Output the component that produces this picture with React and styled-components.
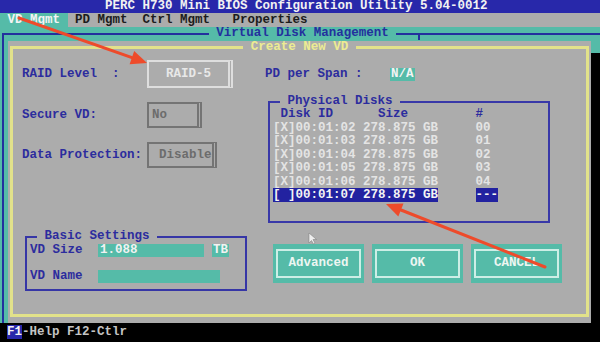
import React from "react";
import styled, { createGlobalStyle } from "styled-components";

const blue = "#2828aa";
const navy = "#2c2c9e";
const gray = "#acacac";
const teal = "#55bba8";
const yellow = "#e2e28a";

const GlobalStyle = createGlobalStyle`
    body{
        margin:0;
        background:#000;
    }
`;

const disks = [
    { id: "00:01:02", no: "00" },
    { id: "00:01:03", no: "01" },
    { id: "00:01:04", no: "02" },
    { id: "00:01:05", no: "03" },
    { id: "00:01:06", no: "04" },
];

function App() {
    return (<>
    <GlobalStyle />
    <Screen>
        <TitleBar>PERC H730 Mini BIOS Configuration Utility 5.04-0012</TitleBar>
        <MenuBar>
            <MenuItem $active>VD Mgmt</MenuItem>
            <MenuItem>PD Mgmt</MenuItem>
            <MenuItem>Ctrl Mgmt</MenuItem>
            <MenuItem $ml="1ch">Properties</MenuItem>
        </MenuBar>
        <Desktop>
            <Frame>
                <FrameTitle>Virtual Disk Management</FrameTitle>
                <Panel>
                    <Dialog>
                        <DialogTitle>Create New VD</DialogTitle>
                        <Body>
                            <LeftCol>
                                <FieldRow $h={28}>
                                    <Label>RAID Level  :</Label>
                                    <ValueBox $w={86} $focus $center>RAID-5</ValueBox>
                                </FieldRow>
                                <FieldRow $h={26} $mt={14}>
                                    <Label>Secure VD:</Label>
                                    <ValueBox $w={55} $pl={3}>No</ValueBox>
                                </FieldRow>
                                <FieldRow $h={26} $mt={14}>
                                    <Label>Data Protection:</Label>
                                    <ValueBox $w={70} $pl={10}>Disable</ValueBox>
                                </FieldRow>
                                <Group>
                                    <GroupTitle>Basic Settings</GroupTitle>
                                    <GroupBody>
                                        <InputRow>
                                            <InputLabel>VD Size</InputLabel>
                                            <InputField $w={106}>1.088</InputField>
                                            <Unit>TB</Unit>
                                        </InputRow>
                                        <InputRow>
                                            <InputLabel>VD Name</InputLabel>
                                            <InputField $w={122}></InputField>
                                        </InputRow>
                                    </GroupBody>
                                </Group>
                            </LeftCol>
                            <RightCol>
                                <SpanRow>
                                    <Label as="span">PD per Span :  </Label>
                                    <Tag>N/A</Tag>
                                </SpanRow>
                                <Disks>
                                    <GroupTitle>Physical Disks</GroupTitle>
                                    <DiskList>
                                        <DiskHead> Disk ID      Size         #</DiskHead>
                                        {disks.map(d => (
                                            <div key={d.id}>{`[X]${d.id} 278.875 GB     ${d.no}`}</div>
                                        ))}
                                        <div><Sel>[ ]00:01:07 278.875 GB</Sel>{"     "}<Sel>---</Sel></div>
                                    </DiskList>
                                </Disks>
                                <ButtonRow>
                                    <Button><ButtonInner>Advanced</ButtonInner></Button>
                                    <Button><ButtonInner>OK</ButtonInner></Button>
                                    <Button><ButtonInner>CANCEL</ButtonInner></Button>
                                </ButtonRow>
                            </RightCol>
                        </Body>
                    </Dialog>
                </Panel>
            </Frame>
        </Desktop>
        <StatusBar><Key>F1</Key>-Help F12-Ctlr</StatusBar>
        <Overlay viewBox="0 0 600 342">
            <line x1="419" y1="34" x2="419" y2="40" stroke="#23309e" strokeWidth="2" />
            <polygon points="309,233 309,243 311.5,240.5 313.5,244 315,243 313,239.5 316.5,239.5" fill="#eeeeee" stroke="#777" strokeWidth="0.5" />
            <line x1="19" y1="18" x2="132" y2="57.7" stroke="#ee4b2b" strokeWidth="3" strokeLinecap="round" />
            <polygon points="147,63 129.6,64.3 134.2,51.1" fill="#ee4b2b" />
            <line x1="545" y1="267" x2="401" y2="210" stroke="#ee4b2b" strokeWidth="3" strokeLinecap="round" />
            <polygon points="386,204 403.5,203.4 398.3,216.4" fill="#ee4b2b" />
        </Overlay>
    </Screen>
    </>);
}

const Screen = styled.div`
    width:600px;
    height:342px;
    overflow:hidden;
    position:relative;
    background:#000;
    display:flex;
    flex-direction:column;
    font-family:"Liberation Mono","DejaVu Sans Mono",monospace;
    font-size:12.5px;
    font-weight:bold;
    white-space:pre;
`;

const TitleBar = styled.div`
    height:13px;
    line-height:13px;
    background:${blue};
    color:#f2f2f2;
    padding-left:105px;
`;

const MenuBar = styled.div`
    height:14px;
    line-height:14px;
    background:${gray};
    color:#1c1c1c;
    display:flex;
`;

const MenuItem = styled.span`
    padding:0 1ch;
    margin-left:${p => p.$ml || 0};
    background:${p => p.$active ? teal : "transparent"};
    color:${p => p.$active ? "#f4f4f4" : "inherit"};
`;

const Desktop = styled.div`
    flex:none;
    height:296px;
    background:${teal};
    overflow:hidden;
`;

const Frame = styled.fieldset`
    margin:0 0 0 2px;
    padding:0;
    min-width:0;
    width:601px;
    box-sizing:border-box;
    border:2px solid #23309e;
    border-bottom:none;
`;

const FrameTitle = styled.legend`
    margin:0 auto;
    padding:0 1ch;
    line-height:13px;
    color:#23309e;
`;

const Panel = styled.div`
    margin:1px 0 0 4px;
    width:583px;
    height:282px;
    box-sizing:border-box;
    padding:0 2px 6px;
    background:${gray};
    box-shadow:9px 12px 0 #000;
`;

const Dialog = styled.fieldset`
    margin:0;
    padding:0;
    min-width:0;
    height:100%;
    box-sizing:border-box;
    border:3px solid ${yellow};
`;

const DialogTitle = styled.legend`
    margin:0 auto;
    padding:0 1ch;
    line-height:13px;
    color:#ecec92;
`;

const Body = styled.div`
    display:flex;
`;

const LeftCol = styled.div`
    width:252px;
    box-sizing:border-box;
    padding:6px 0 0 9px;
    display:flex;
    flex-direction:column;
`;

const RightCol = styled.div`
    flex:1;
    padding-top:14px;
    display:flex;
    flex-direction:column;
    align-items:flex-start;
`;

const FieldRow = styled.div`
    display:flex;
    align-items:center;
    height:${p => p.$h}px;
    margin-top:${p => p.$mt || 0}px;
`;

const Label = styled.div`
    width:125px;
    color:${navy};
    line-height:13px;
`;

const ValueBox = styled.div`
    box-sizing:border-box;
    width:${p => p.$w}px;
    height:100%;
    display:flex;
    align-items:center;
    justify-content:${p => p.$center ? "center" : "flex-start"};
    padding-left:${p => p.$pl || 0}px;
    border:2px solid ${p => p.$focus ? "#dedede" : "#747474"};
    border-right:5px double ${p => p.$focus ? "#dedede" : "#747474"};
    color:${p => p.$focus ? "#e8e8e8" : "#6c6c6c"};
`;

const Group = styled.fieldset`
    margin:62px 0 0 3px;
    padding:0;
    min-width:0;
    width:222px;
    box-sizing:border-box;
    border:2px solid #3636a6;
`;

const GroupTitle = styled.legend`
    margin-left:10px;
    padding:0 1ch;
    line-height:13px;
    color:${navy};
`;

const GroupBody = styled.div`
    padding:1px 0 6px 3px;
    display:flex;
    flex-direction:column;
    gap:13px;
`;

const InputRow = styled.div`
    display:flex;
    align-items:center;
    height:13px;
    line-height:13px;
`;

const InputLabel = styled.span`
    width:68px;
    color:${navy};
`;

const InputField = styled.span`
    width:${p => p.$w}px;
    height:13px;
    box-sizing:border-box;
    padding-left:2px;
    background:${teal};
    color:#f2f2f2;
`;

const Unit = styled.span`
    margin-left:8px;
    padding:0 1px;
    background:${teal};
    color:#f2f2f2;
`;

const SpanRow = styled.div`
    display:flex;
    line-height:13px;
`;

const Tag = styled.span`
    background:${teal};
    color:#f4f4f4;
    padding:0 1px;
`;

const Disks = styled.fieldset`
    margin:14px 0 0 3px;
    padding:0;
    min-width:0;
    width:282px;
    box-sizing:border-box;
    border:2px solid #3838a8;
`;

const DiskList = styled.div`
    padding:0 0 18px 3px;
    line-height:13.5px;
    color:#e4e4e4;
`;

const DiskHead = styled.div`
    color:${navy};
`;

const Sel = styled.span`
    background:#2222a0;
    color:#f4f4f4;
`;

const ButtonRow = styled.div`
    display:flex;
    gap:8px;
    margin:21px 0 0 8px;
`;

const Button = styled.div`
    width:91px;
    height:39px;
    box-sizing:border-box;
    padding:5px 3px;
    background:${teal};
`;

const ButtonInner = styled.div`
    height:100%;
    box-sizing:border-box;
    border:2px solid #cdeee6;
    display:flex;
    align-items:center;
    justify-content:center;
    color:#eef6f2;
`;

const StatusBar = styled.div`
    height:19px;
    line-height:19px;
    padding-left:7px;
    background:#000;
    color:#c4c4c4;
`;

const Key = styled.span`
    background:${blue};
    color:#f4f4f4;
`;

const Overlay = styled.svg`
    position:absolute;
    left:0;
    top:0;
    width:600px;
    height:342px;
    pointer-events:none;
`;

export default App;
